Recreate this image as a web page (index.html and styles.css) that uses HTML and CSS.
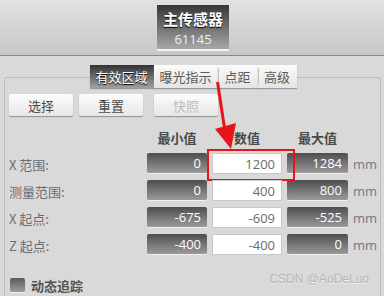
FILE: index.html
```html
<!DOCTYPE html>
<html lang="zh">
<head>
<meta charset="utf-8">
<link rel="stylesheet" href="styles.css">
</head>
<body>
<header class="topbar">
  <div class="title-box">
    <div class="title">主传感器</div>
    <div class="serial">61145</div>
  </div>
</header>
<main class="main">
  <nav class="tabs">
    <span class="tab active w64">有效区域</span>
    <span class="tab w64">曝光指示</span>
    <span class="tab w40">点距</span>
    <span class="tab w39">高级</span>
  </nav>
  <section class="panel">
    <div class="buttons">
      <button class="btn">选择</button>
      <button class="btn">重置</button>
      <button class="btn disabled">快照</button>
    </div>
    <div class="grid">
      <span></span>
      <span class="head">最小值</span>
      <span class="head">数值</span>
      <span class="head">最大值</span>
      <span></span>

      <span class="label">X 范围:</span>
      <span class="dark">0</span>
      <span class="val hl">1200</span>
      <span class="dark">1284</span>
      <span class="unit">mm</span>

      <span class="label">测量范围:</span>
      <span class="dark">0</span>
      <span class="val">400</span>
      <span class="dark">800</span>
      <span class="unit">mm</span>

      <span class="label">X 起点:</span>
      <span class="dark">-675</span>
      <span class="val">-609</span>
      <span class="dark">-525</span>
      <span class="unit">mm</span>

      <span class="label">Z 起点:</span>
      <span class="dark">-400</span>
      <span class="val">-400</span>
      <span class="dark">0</span>
      <span class="unit">mm</span>
    </div>
    <div class="footer">
      <label class="check"><span class="box"></span>动态追踪</label>
      <span class="watermark">CSDN @AoDeLuo</span>
    </div>
  </section>
</main>
<svg class="arrow" width="384" height="296" viewBox="0 0 384 296">
  <line x1="217.5" y1="82" x2="224.5" y2="128" stroke="#e8141c" stroke-width="3"/>
  <polygon points="215,129 236,123 231,149" fill="#e8141c"/>
</svg>
</body>
</html>
```

FILE: styles.css
```css
* { box-sizing: border-box; }
html, body { margin: 0; padding: 0; }
body {
  width: 384px;
  height: 296px;
  overflow: hidden;
  background: #d9d9d9;
  font-family: "Open Sans", "Noto Sans CJK SC", sans-serif;
  font-size: 13px;
  color: #555;
  position: relative;
}
.topbar {
  height: 56px;
  background: linear-gradient(#e2e2e2, #c6c6c6);
  border-bottom: 1px solid #8a8a8a;
  display: flex;
  justify-content: center;
  padding-top: 5px;
  padding-left: 2px;
}
.title-box {
  width: 72px;
  height: 46px;
  background: linear-gradient(#363636, #a8a8a8);
  border-bottom: 2px solid #f4f4f4;
  display: flex;
  flex-direction: column;
  align-items: center;
  color: #fff;
}
.title {
  font-family: "Noto Sans CJK SC", sans-serif;
  font-weight: bold;
  font-size: 15px;
  line-height: 18px;
  margin-top: 5px;
  text-shadow: 0 1px 1px #000;
}
.serial {
  font-size: 13px;
  line-height: 16px;
  margin-top: 3px;
  color: #f0f0f0;
}
.main { padding: 9px 3px 0 4px; }
.tabs {
  display: flex;
  justify-content: center;
  position: relative;
  z-index: 1;
  height: 23px;
  padding-left: 1px;
}
.tab {
  display: flex;
  align-items: center;
  justify-content: center;
  height: 23px;
  background: linear-gradient(#fbfbfb, #e4e4e4);
  box-shadow: 0 1px 1px #9a9a9a;
  font-family: "Noto Sans CJK SC", sans-serif;
  font-size: 13px;
  color: #5a5a5a;
  position: relative;
}
.w64 { width: 64px; }
.w40 { width: 40px; }
.w39 { width: 39px; }
.tab + .tab::before {
  content: "";
  position: absolute;
  left: 0;
  top: 3px;
  bottom: 4px;
  border-left: 1px solid #c4c4c4;
}
.tab.active + .tab::before { display: none; }
.tab.active {
  background: linear-gradient(#333, #a0a0a0);
  color: #fff;
  text-shadow: 0 1px 1px #000;
}
.panel {
  margin-top: -11px;
  height: 230px;
  border: 1px solid #bdbdbd;
  border-bottom: none;
  border-radius: 3px 3px 0 0;
  padding: 16px 4px 0 4px;
}
.buttons { display: flex; gap: 6px; }
.btn {
  width: 64px;
  height: 22px;
  border: none;
  border-radius: 2px;
  background: linear-gradient(#fdfdfd, #e6e6e6);
  box-shadow: 0 1px 1px #8e8e8e;
  font-family: "Noto Sans CJK SC", sans-serif;
  font-size: 13px;
  color: #4a4a4a;
  padding: 0;
}
.btn.disabled { color: #bdbdbd; margin-left: 5px; }
.grid {
  margin-top: 11px;
  display: grid;
  grid-template-columns: 133px 60px 70px 61px auto;
  grid-template-rows: 20px repeat(4, 21px);
  column-gap: 5px;
  row-gap: 6px;
  align-items: center;
}
.head {
  text-align: center;
  font-family: "Noto Sans CJK SC", sans-serif;
  font-weight: bold;
  color: #4a4a4a;
  font-size: 13px;
}
.label {
  font-family: "Noto Sans CJK SC", sans-serif;
  color: #6c6c74;
  font-size: 13px;
  padding-top: 1px;
}
.dark, .val {
  height: 21px;
  line-height: 20px;
  text-align: right;
  padding-right: 6px;
  font-size: 13px;
}
.dark {
  background: linear-gradient(#4e4e4e, #9a9a9a);
  border-bottom: 1px solid #f0f0f0;
  border-radius: 2px;
  color: #fff;
}
.val {
  background: #fff;
  border: 1px solid #c8c8c8;
  color: #6a6a6a;
  position: relative;
}
.val.hl::after {
  content: "";
  position: absolute;
  left: -6px;
  top: -5px;
  width: 84px;
  height: 28px;
  border: 2px solid #e8141c;
}
.unit { color: #767684; font-size: 13px; }
.footer {
  margin-top: 23px;
  display: flex;
  justify-content: space-between;
  align-items: flex-start;
}
.check {
  display: flex;
  align-items: center;
  gap: 6px;
  margin-left: 1px;
  font-family: "Noto Sans CJK SC", sans-serif;
  font-weight: bold;
  color: #555;
  font-size: 13px;
  line-height: 15px;
}
.box {
  width: 15px;
  height: 15px;
  border-radius: 2px;
  background: linear-gradient(#5a5a5a, #9c9c9c);
  border-bottom: 1px solid #eee;
}
.watermark {
  font-family: "Liberation Sans", sans-serif;
  font-size: 12px;
  color: #b4b4b4;
  text-shadow: 0 1px 0 #eee;
  margin-right: 7px;
  margin-top: -6px;
}
.arrow {
  position: absolute;
  left: 0;
  top: 0;
  pointer-events: none;
  z-index: 5;
}
```
